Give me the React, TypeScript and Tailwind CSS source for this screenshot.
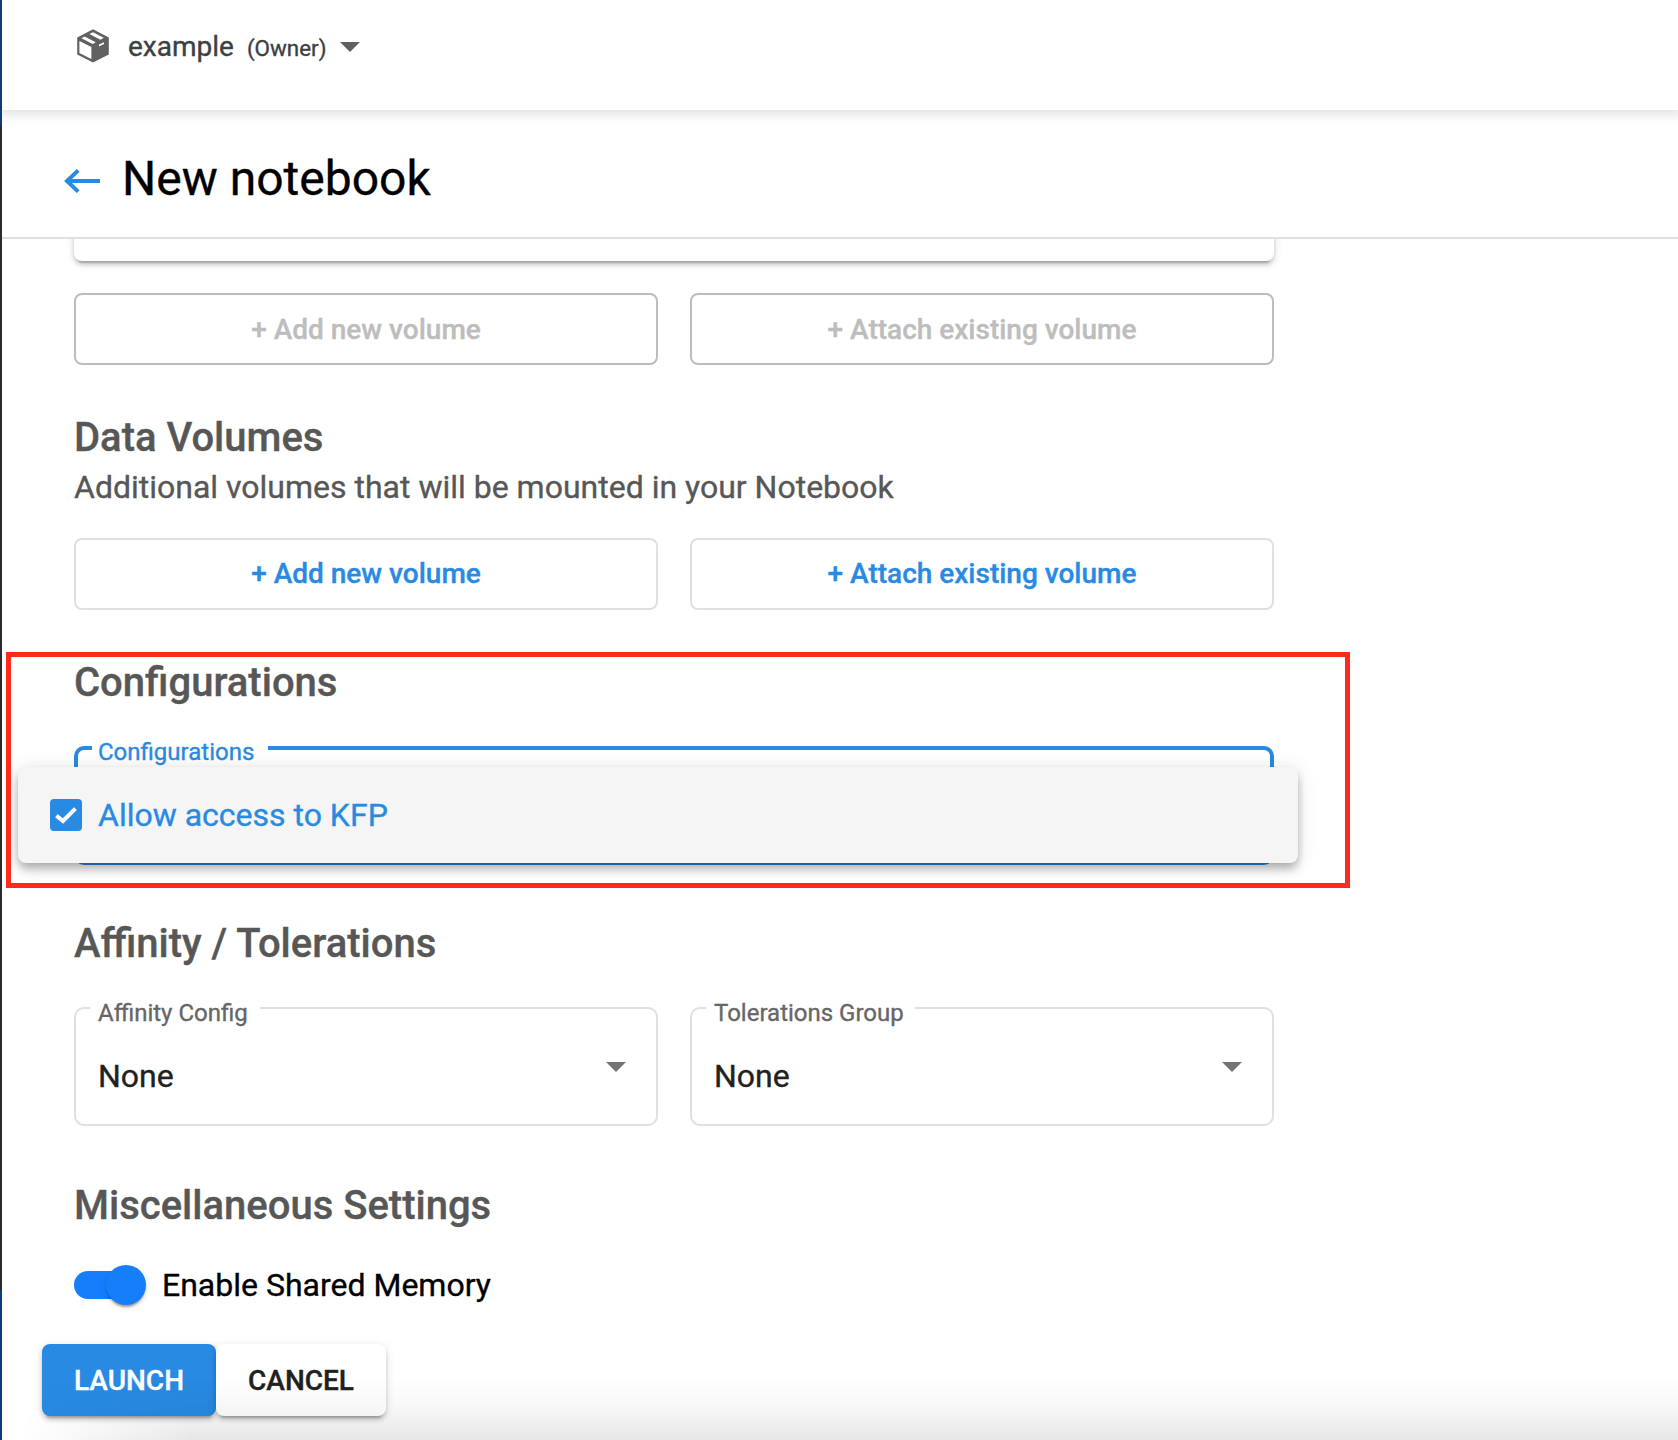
import type { ReactNode } from "react";

function PackageIcon() {
  return (
    <svg width="32" height="34" viewBox="0 0 32 34" fill="none">
      <path d="M16 0.3 L31.8 8.6 V25.4 L16 33.4 L0.2 25.4 V8.6 Z" fill="#5f6062" />
      <path d="M2.4 11.9 L14.4 18 V30.1 L2.4 24 Z" fill="#fff" />
      <path d="M4.4 9.2 L7.6 7.5 L18.7 13.2 L15.8 14.9 Z" fill="#fff" />
      <path d="M12.4 5 L16 3.2 L26.8 8.8 L23.4 10.7 Z" fill="#fff" />
      <path d="M22 15.6 L27 13.2 V14.9 L22 17.4 Z" fill="#fff" />
    </svg>
  );
}

function Caret({ className }: { className: string }) {
  return (
    <svg width="20" height="10" viewBox="0 0 20 10" className={className}>
      <path d="M0 0H20L10 10Z" fill="currentColor" />
    </svg>
  );
}

function Heading({ children, className }: { children: ReactNode; className: string }) {
  return (
    <h2 className={`h-12 pt-px text-[40px] leading-[48px] font-medium text-[#575757] ${className}`}>{children}</h2>
  );
}

function VolumeButtons({ disabled, className }: { disabled?: boolean; className: string }) {
  const tone = disabled ? "border-[#bdbdbd] text-[#bdbdbd] pt-0.5" : "border-[#e0e0e0] text-[#288ae3]";
  return (
    <div className={`grid grid-cols-2 gap-8 ${className}`}>
      {["+ Add new volume", "+ Attach existing volume"].map((label) => (
        <button key={label} className={`h-[72px] rounded-lg border-2 text-[28px] leading-9 font-medium ${tone}`}>
          {label}
        </button>
      ))}
    </div>
  );
}

function SelectField({ label, notch }: { label: string; notch: string }) {
  return (
    <div className="relative flex h-[119px]">
      <div className="w-4 rounded-l-[10px] border-y-2 border-l-2 border-[#e0e0e0]" />
      <div className={`border-b-2 border-[#e0e0e0] ${notch}`} />
      <div className="flex-1 rounded-r-[10px] border-y-2 border-r-2 border-[#e0e0e0]" />
      <span className="absolute top-[-8px] left-6 text-2xl leading-7 text-[#666]">{label}</span>
      <span className="absolute top-[49px] left-6 text-[32px] leading-10 text-[#212121]">None</span>
      <Caret className="absolute top-[55px] right-8 text-[#757575]" />
    </div>
  );
}

export default function App() {
  return (
    <div className="flex h-[1440px] w-[1678px] overflow-hidden bg-white font-['Roboto',sans-serif] [-webkit-text-stroke:0.35px_currentColor]">
      <div className="flex w-0.5 shrink-0 flex-col">
        <div className="h-[125px] bg-[#0c3c7c]" />
        <div className="h-[1165px] bg-[#2b2b2d]" />
        <div className="flex-1 bg-[#0b3b7d]" />
      </div>

      <div className="relative flex min-w-0 flex-1 flex-col">
        <header className="relative z-10 flex h-[110px] shrink-0 items-start bg-white pl-[75px] shadow-[0_2px_10px_3px_rgba(60,64,67,0.15)]">
          <div className="flex h-[92px] items-center text-[#3c4043]">
            <PackageIcon />
            <div className="mt-0.5 ml-[19px] flex items-baseline">
              <span className="text-[28px] leading-9">example</span>
              <span className="ml-[13px] text-[22.4px] leading-9">(Owner)</span>
            </div>
            <Caret className="mt-0.5 ml-[14px] text-[#5f6062]" />
          </div>
        </header>

        <div className="flex h-[129px] shrink-0 items-center border-b-2 border-[#e0e0e0] pl-[62px]">
          <svg width="36" height="24" viewBox="0 0 36 24" fill="none" stroke="#288ae3" strokeWidth="4" className="mt-[15px]">
            <path d="M36 12H3M14.2 1.4L3 12L14.2 22.6" />
          </svg>
          <h1 className="mt-[10px] ml-[22px] text-[48px] leading-[56px] text-black">New notebook</h1>
        </div>

        <main className="relative flex-1 overflow-hidden pl-[72px]">
          <div className="w-[1200px]">
            <div className="-mt-10 h-[62px] rounded-b-lg bg-white shadow-[0_6px_2px_-4px_rgba(0,0,0,0.2),0_4px_4px_0_rgba(0,0,0,0.14),0_2px_10px_0_rgba(0,0,0,0.12)]" />
            <VolumeButtons disabled className="mt-8" />

            <Heading className="mt-12">Data Volumes</Heading>
            <p className="mt-1.5 text-[32px] leading-10 text-[#575757]">
              Additional volumes that will be mounted in your Notebook
            </p>
            <VolumeButtons className="mt-[31px]" />

            <Heading className="mt-12">Configurations</Heading>
            <div className="relative mt-10 flex h-[119px]">
              <div className="w-[18px] rounded-l-[10px] border-y-4 border-l-4 border-[#288ae3]" />
              <div className="w-44 border-b-4 border-[#288ae3]" />
              <div className="flex-1 rounded-r-[10px] border-y-4 border-r-4 border-[#288ae3]" />
              <span className="absolute top-[-8px] left-6 text-2xl leading-7 text-[#288ae3]">Configurations</span>
              <div className="absolute top-[21px] left-[-56px] flex h-24 w-[1280px] items-center rounded-lg bg-[#f5f5f5] pl-8 shadow-[0_4px_8px_-2px_rgba(0,0,0,0.2),0_8px_10px_0_rgba(0,0,0,0.14),0_2px_20px_0_rgba(0,0,0,0.12)]">
                <div className="flex size-8 items-center justify-center rounded-[4px] bg-[#288ae3]">
                  <svg width="22" height="17" viewBox="0 0 22 17" fill="none" stroke="#fff" strokeWidth="4">
                    <path d="M1.4 8.6L8 14L20.4 1.6" />
                  </svg>
                </div>
                <span className="ml-4 text-[32px] leading-10 text-[#288ae3]">Allow access to KFP</span>
              </div>
            </div>

            <Heading className="mt-[54px]">Affinity / Tolerations</Heading>
            <div className="mt-10 grid grid-cols-2 gap-8">
              <SelectField label="Affinity Config" notch="w-[170px]" />
              <SelectField label="Tolerations Group" notch="w-[209px]" />
            </div>

            <Heading className="mt-[55px]">Miscellaneous Settings</Heading>
            <div className="mt-9 flex h-10 items-center">
              <div className="flex h-7 w-[72px] items-center justify-end rounded-full">
                <div className="h-7 w-[52px] rounded-l-full bg-[#157ffb]" />
                <div className="-ml-5 size-10 shrink-0 rounded-full bg-[#157ffb] shadow-[0_4px_2px_-2px_rgba(0,0,0,0.2),0_2px_2px_0_rgba(0,0,0,0.14),0_2px_6px_0_rgba(0,0,0,0.12)]" />
              </div>
              <span className="ml-4 text-[32px] leading-10 text-black">Enable Shared Memory</span>
            </div>
          </div>

          <div className="mt-[39px] -ml-8 flex">
            <button className="h-[72px] w-[174px] rounded-lg bg-[#288ae3] pt-0.5 text-[28px] leading-9 font-medium text-white shadow-[0_6px_2px_-4px_rgba(0,0,0,0.2),0_4px_4px_0_rgba(0,0,0,0.14),0_2px_10px_0_rgba(0,0,0,0.12)]">
              LAUNCH
            </button>
            <button className="h-[72px] w-[170px] rounded-lg bg-white pt-0.5 text-[28px] leading-9 font-medium text-[#212121] shadow-[0_6px_2px_-4px_rgba(0,0,0,0.2),0_4px_4px_0_rgba(0,0,0,0.14),0_2px_10px_0_rgba(0,0,0,0.12)]">
              CANCEL
            </button>
          </div>
        </main>

        <div className="absolute top-[652px] left-1 h-[236px] w-[1344px] border-[5px] border-[#fd2a1e]" />
        <div className="pointer-events-none absolute inset-x-0 bottom-0 h-16 bg-gradient-to-b from-black/0 via-black/[0.03] to-black/[0.095] [mask-image:linear-gradient(to_right,transparent_20px,black_190px)]" />
      </div>
    </div>
  );
}
